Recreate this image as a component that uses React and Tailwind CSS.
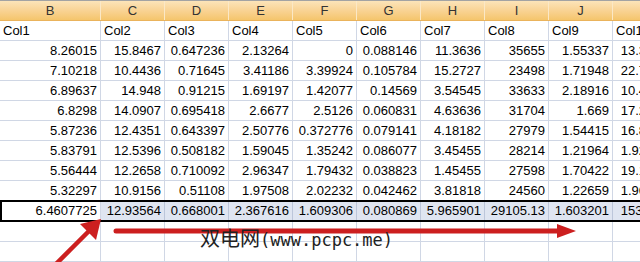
import React from "react";

const letters = ["B", "C", "D", "E", "F", "G", "H", "I", "J", ""];
const colW = ["w-[101px]", "w-[64px]", "w-[64px]", "w-[64px]", "w-[64px]", "w-[64px]", "w-[64px]", "w-[64px]", "w-[64px]", "w-[66px]"];

const rows = [
  ["8.26015", "15.8467", "0.647236", "2.13264", "0", "0.088146", "11.3636", "35655", "1.55337", "13.38462"],
  ["7.10218", "10.4436", "0.71645", "3.41186", "3.39924", "0.105784", "15.2727", "23498", "1.71948", "22.76923"],
  ["6.89637", "14.948", "0.91215", "1.69197", "1.42077", "0.14569", "3.54545", "33633", "2.18916", "10.46154"],
  ["6.8298", "14.0907", "0.695418", "2.6677", "2.5126", "0.060831", "4.63636", "31704", "1.669", "17.23077"],
  ["5.87236", "12.4351", "0.643397", "2.50776", "0.372776", "0.079141", "4.18182", "27979", "1.54415", "16.84615"],
  ["5.83791", "12.5396", "0.508182", "1.59045", "1.35242", "0.086077", "3.45455", "28214", "1.21964", "1.923077"],
  ["5.56444", "12.2658", "0.710092", "2.96347", "1.79432", "0.038823", "1.45455", "27598", "1.70422", "19.15385"],
  ["5.32297", "10.9156", "0.51108", "1.97508", "2.02232", "0.042462", "3.81818", "24560", "1.22659", "1.961538"],
];

const totals = ["6.4607725", "12.93564", "0.668001", "2.367616", "1.609306", "0.080869", "5.965901", "29105.13", "1.603201", "153.4615"];

function Row({ cells, last }) {
  return (
    <div className={"flex " + (last ? "h-[19px]" : "h-[20px] border-b border-[#d0d7e5]")}>
      {cells.map((c, i) => (
        <div
          key={i}
          className={colW[i] + " shrink-0 border-r border-[#d0d7e5] text-right pr-[3px] leading-[19px] overflow-hidden whitespace-nowrap"}
        >
          {c}
        </div>
      ))}
    </div>
  );
}

export default function App() {
  return (
    <div className="relative w-[640px] h-[262px] overflow-hidden bg-white text-[13px] text-black font-['Liberation_Sans',Arial,sans-serif]">
      {/* column header */}
      <div className="flex h-[21px] border-t border-[#a3a3a3] border-b border-b-[#eab35c] bg-gradient-to-b from-[#fce4b9] via-[#f9d394] to-[#f5c56c] text-[#333]">
        {letters.map((l, i) => (
          <div key={i} className={colW[i] + " shrink-0 border-r border-[#fbe8c6] text-center leading-[19px]"}>
            {l}
          </div>
        ))}
      </div>
      {/* Col names */}
      <div className="flex h-[20px] border-b border-[#d0d7e5]">
        {["Col1", "Col2", "Col3", "Col4", "Col5", "Col6", "Col7", "Col8", "Col9", "Col10"].map((c, i) => (
          <div key={i} className={colW[i] + " shrink-0 border-r border-[#d0d7e5] pl-[3px] leading-[19px] overflow-hidden whitespace-nowrap"}>
            {c}
          </div>
        ))}
      </div>
      {rows.map((r, i) => (
        <Row key={i} cells={r} last={i === rows.length - 1} />
      ))}
      {/* highlighted totals row */}
      <div className="flex h-[22px] w-[700px] border-y-2 border-l-2 border-black">
        {totals.map((c, i) => (
          <div
            key={i}
            className={
              (i === 0 ? "w-[99px] bg-white border-[#d0d7e5]" : colW[i] + " bg-[#dfe5f1] border-[#bcc6da]") +
              " shrink-0 border-r text-right pr-[3px] leading-[18px] overflow-hidden whitespace-nowrap"
            }
          >
            {c}
          </div>
        ))}
      </div>
      <Row cells={["", "", "", "", "", "", "", "", "", ""]} />
      <Row cells={["", "", "", "", "", "", "", "", "", ""]} />

      {/* red arrows */}
      <svg className="absolute left-0 top-0 pointer-events-none" width="640" height="262" viewBox="0 0 640 262">
        <line x1="52" y1="268" x2="91" y2="229" stroke="#cc1f1f" strokeWidth="4.5" />
        <polygon points="101,219 96,240 80,224" fill="#cc1f1f" />
        <line x1="116" y1="231" x2="562" y2="231" stroke="#cc1f1f" strokeWidth="5" strokeLinecap="round" />
        <polygon points="557,224 576,231 557,238" fill="#cc1f1f" />
      </svg>

      {/* watermark */}
      <div className="absolute left-[200px] top-[228px] leading-none whitespace-nowrap text-[#222]">
        <span className="text-[20px] font-['Noto_Sans_CJK_SC',sans-serif]">双电网</span>
        <span className="text-[17px] font-['DejaVu_Sans_Mono',monospace]">(www.pcpc.me)</span>
      </div>
    </div>
  );
}
